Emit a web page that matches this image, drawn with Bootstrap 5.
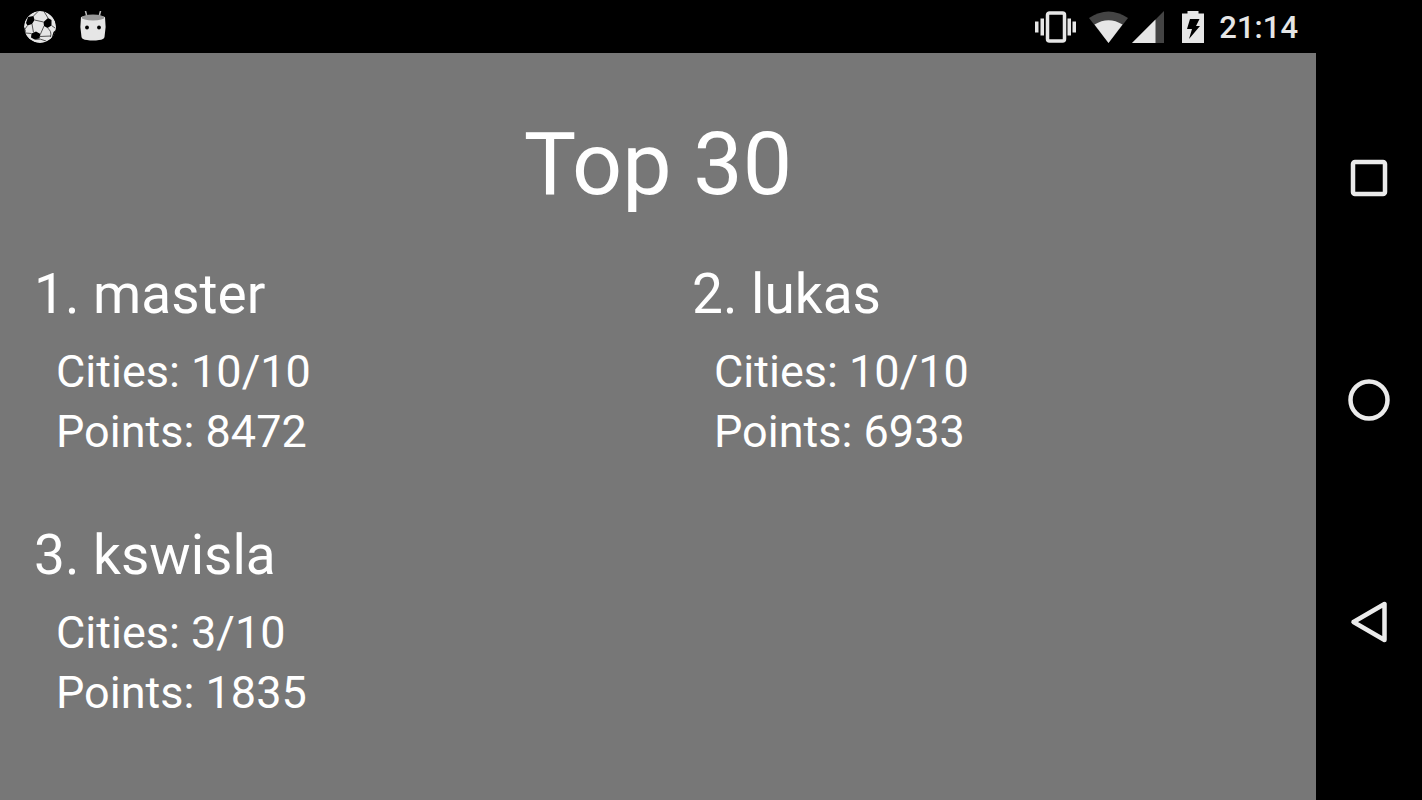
<!DOCTYPE html>
<html lang="en">
<head>
<meta charset="utf-8">
<meta name="viewport" content="width=device-width, initial-scale=1">
<title>Top 30</title>
<link href="https://cdn.jsdelivr.net/npm/bootstrap@5.3.0/dist/css/bootstrap.min.css" rel="stylesheet">
<style>
  body { font-family: Roboto, sans-serif; background: #000; color: #fff; }
  svg { display: block; }
  .status-bar { height: 53px; padding: 0 18px 0 24px; color: #e6e6e6; }
  .status-left { gap: 23px; }
  .radio-icons { gap: 3px; margin: 0 18px 0 12px; }
  .clock { font-size: 31px; line-height: 36px; font-weight: 500; padding-top: 2px; margin-left: 15px; }
  .board { background: #777; padding: 59px 0 16px; }
  .board-title { font-size: 88px; line-height: 104px; font-weight: 400; margin-bottom: 45px; }
  .entry { padding: 0 34px; margin-bottom: 60px; }
  .entry-name { font-size: 55px; line-height: 66px; font-weight: 400; margin-bottom: 15px; }
  .entry-detail { font-size: 45px; line-height: 60px; margin: 0; padding-left: 22px; }
  .soft-keys { width: 106px; padding: 67px 0; }
  .soft-key { border: 0; background: none; padding: 0; color: #ebebeb; }
</style>
</head>
<body>
<div class="d-flex min-vh-100">
  <div class="d-flex flex-column flex-grow-1">
    <header class="status-bar d-flex align-items-center justify-content-between">
      <div class="status-left d-flex align-items-center">
        <svg width="32" height="32" viewBox="0 0 32 32" role="img" aria-label="Football">
          <defs><clipPath id="ball"><circle cx="16" cy="16" r="16"/></clipPath></defs>
          <g clip-path="url(#ball)">
            <circle cx="16" cy="16" r="16" fill="#e6e6e6"/>
            <path d="M4 6L9.500 5 10.500 9 8 13 3.500 14.500 2 12zM19.500 11L24 7 27.500 9 27.500 14.500 23.500 17 20 15zM7.500 22.500L12 20.500 16.500 23 15.500 27.500 10.500 28.500 7 26.500zM0 16L1.500 19 1.500 23-1 22zM29.500 21L33 18 31 26 28 26z" fill="#000"/>
            <path d="M10.500 9L19.500 11M9.500 5L14 .5M24 7L20 .5M8 13L9.500 21.500M3.500 14.500L1 18M16.500 23L20 15M27.500 14.500L31 17M23.500 17Q28 20 26.500 26M1.500 22L7.500 22.500M11 28.500Q16 27 22 30M15.500 25.500L27 25" stroke="#555" stroke-width="1" fill="none"/>
          </g>
        </svg>
        <svg width="28" height="32" viewBox="0 0 28 32" role="img" aria-label="Robot">
          <path d="M6.500 0L8 6M21.500 0L20 6" stroke="#bbb" stroke-width="1.500" stroke-linecap="round"/>
          <path d="M2 6Q14 2 26 6Q27.500 16 25.500 26Q25 28.500 20 29Q14 30 8 29Q3 28.500 2.500 26Q.5 16 2 6z" fill="#e6e6e6"/>
          <ellipse cx="14" cy="6.500" rx="11.500" ry="3" fill="#999"/>
          <circle cx="8" cy="16.500" r="1.900" fill="#000"/><circle cx="20" cy="16.500" r="1.900" fill="#000"/>
        </svg>
      </div>
      <div class="d-flex align-items-center">
        <svg width="42" height="32" viewBox="0 0 42 32" role="img" aria-label="Vibrate" fill="#e6e6e6">
          <rect x="12.500" y="2" width="17" height="28" rx="2" fill="none" stroke="#e6e6e6" stroke-width="3.500"/>
          <path d="M0 10.500h3.500v11H0zM5.500 7.500H9v17H5.500zM32.500 7.500H36v17h-3.500zM37.500 10.500H41v11h-3.500z"/>
        </svg>
        <div class="radio-icons d-flex">
          <svg width="40" height="34" viewBox="0 0 40 34" role="img" aria-label="Wi-Fi">
            <path d="M0 8Q19.500-5 39 8L19.500 33z" fill="#444"/>
            <path d="M5.500 14.500Q19.500 6 33.500 14.500L19.500 33z" fill="#e6e6e6"/>
          </svg>
          <svg width="32" height="34" viewBox="0 0 32 34" role="img" aria-label="Mobile signal">
            <path d="M0 33L32 1v32z" fill="#444"/><path d="M0 33L23.500 9.500V33z" fill="#e6e6e6"/>
          </svg>
        </div>
        <svg width="22" height="34" viewBox="0 0 22 34" role="img" aria-label="Battery charging">
          <path d="M0 3.500h5.500V1h11v2.500H22V33H0z" fill="#e6e6e6"/>
          <path d="M8 9h9.500l-3.500 7H18L7 29 10 19H5z" fill="#000"/>
        </svg>
        <span class="clock">21:14</span>
      </div>
    </header>
    <main class="board flex-grow-1">
      <h1 class="board-title text-center">Top 30</h1>
      <div class="row g-0">
        <section class="col-6"><div class="entry">
          <h2 class="entry-name">1. master</h2>
          <p class="entry-detail">Cities: 10/10</p>
          <p class="entry-detail">Points: 8472</p>
        </div></section>
        <section class="col-6"><div class="entry">
          <h2 class="entry-name">2. lukas</h2>
          <p class="entry-detail">Cities: 10/10</p>
          <p class="entry-detail">Points: 6933</p>
        </div></section>
        <section class="col-6"><div class="entry">
          <h2 class="entry-name">3. kswisla</h2>
          <p class="entry-detail">Cities: 3/10</p>
          <p class="entry-detail">Points: 1835</p>
        </div></section>
      </div>
    </main>
  </div>
  <nav class="soft-keys d-flex flex-column flex-shrink-0" aria-label="System">
    <button type="button" class="soft-key d-flex flex-fill align-items-center justify-content-center" aria-label="Recent apps">
      <svg width="44" height="44" viewBox="0 0 44 44" fill="none" stroke="currentColor" stroke-width="4.500"><rect x="6" y="6" width="32" height="32" rx="2"/></svg>
    </button>
    <button type="button" class="soft-key d-flex flex-fill align-items-center justify-content-center" aria-label="Home">
      <svg width="44" height="44" viewBox="0 0 44 44" fill="none" stroke="currentColor" stroke-width="4.500"><circle cx="22" cy="22" r="18.500"/></svg>
    </button>
    <button type="button" class="soft-key d-flex flex-fill align-items-center justify-content-center" aria-label="Back">
      <svg width="44" height="44" viewBox="0 0 44 44" fill="none" stroke="currentColor" stroke-width="4.500" stroke-linejoin="round"><path d="M37.500 4v36L6.500 22z"/></svg>
    </button>
  </nav>
</div>
<script src="https://cdn.jsdelivr.net/npm/bootstrap@5.3.0/dist/js/bootstrap.bundle.min.js"></script>
</body>
</html>
